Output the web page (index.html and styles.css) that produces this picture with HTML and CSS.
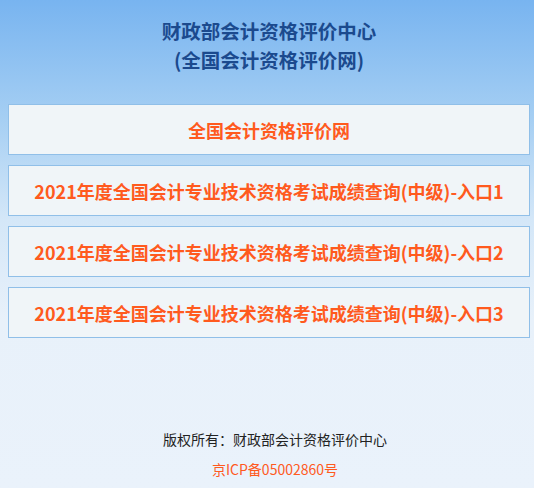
FILE: index.html
```html
<!DOCTYPE html>
<html lang="zh-CN">
<head>
<meta charset="utf-8">
<title>财政部会计资格评价中心</title>
<link rel="stylesheet" href="styles.css">
</head>
<body>
<div class="page">
  <header class="head">
    <h1 class="title">财政部会计资格评价中心<br>(全国会计资格评价网)</h1>
  </header>
  <ul class="links">
    <li class="link-item"><a class="link" href="#">全国会计资格评价网</a></li>
    <li class="link-item"><a class="link" href="#">2021年度全国会计专业技术资格考试成绩查询(中级)-入口1</a></li>
    <li class="link-item"><a class="link" href="#">2021年度全国会计专业技术资格考试成绩查询(中级)-入口2</a></li>
    <li class="link-item"><a class="link" href="#">2021年度全国会计专业技术资格考试成绩查询(中级)-入口3</a></li>
  </ul>
  <footer class="foot">
    <p class="copy">版权所有：财政部会计资格评价中心</p>
    <p class="icp">京ICP备05002860号</p>
  </footer>
</div>
</body>
</html>
```

FILE: styles.css
```css
html, body {
  margin: 0;
  padding: 0;
  height: 100%;
}
body {
  background: linear-gradient(to bottom, #78b4f0 0px, #a6cff3 120px, #d4e7f8 220px, #e8f1fa 320px, #eaf2fb 488px);
  font-family: "Noto Sans CJK SC", "Noto Sans", sans-serif;
}
.page {
  height: 488px;
  display: flex;
  flex-direction: column;
  padding: 0 4px 0 8px;
  box-sizing: border-box;
}
.head {
  padding-top: 16px;
  height: 104px;
  box-sizing: border-box;
}
.title {
  margin: 0;
  text-align: center;
  font-size: 19.5px;
  line-height: 29px;
  font-weight: bold;
  color: #1b4a8e;
}
.links {
  list-style: none;
  margin: 0;
  padding: 0;
  display: flex;
  flex-direction: column;
  gap: 10px;
}
.link-item {
  height: 51px;
  box-sizing: border-box;
  border: 1px solid #90bfe8;
  background: #f0f5f8;
  display: flex;
  align-items: center;
  justify-content: center;
}
.link {
  font-size: 18px;
  font-weight: bold;
  color: #ff5a1e;
  text-decoration: none;
  white-space: nowrap;
}
.foot {
  margin-top: auto;
  padding: 0 0 4px 12px;
  text-align: center;
  font-size: 14px;
}
.copy {
  margin: 0;
  line-height: 30px;
  color: #222;
}
.icp {
  margin: 0;
  line-height: 30px;
  color: #ff5a1e;
}
```
